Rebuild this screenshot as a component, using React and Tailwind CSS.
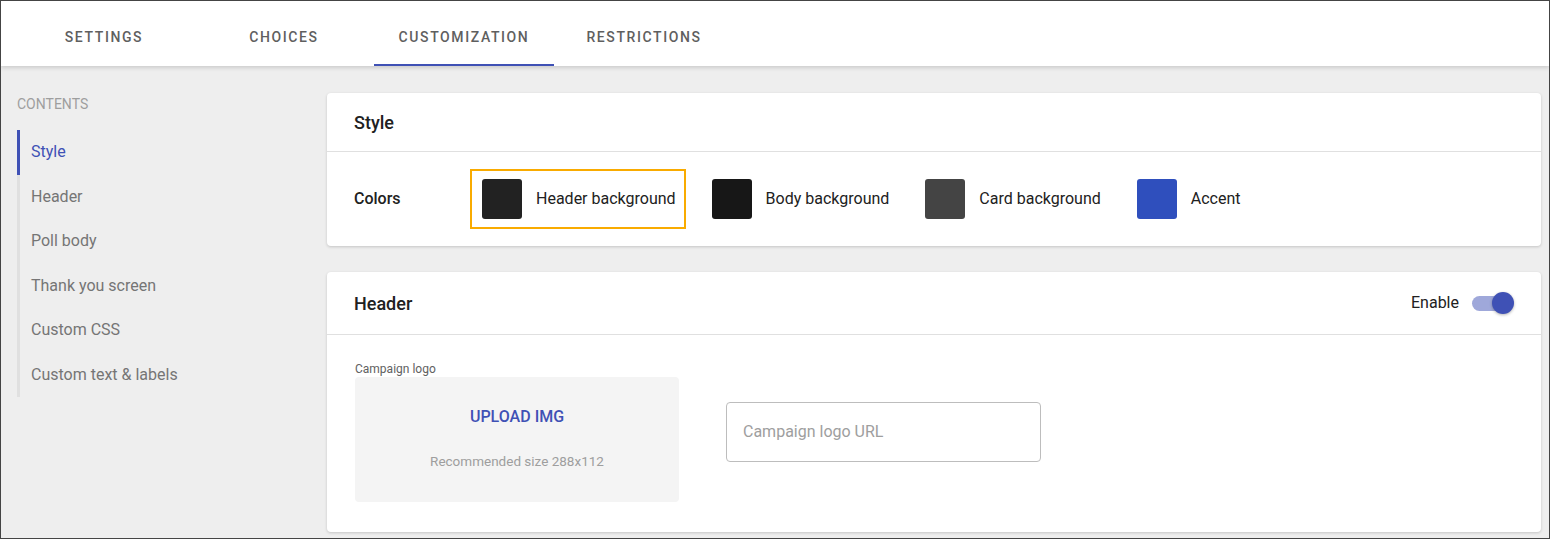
import React from 'react';

const TABS = ['SETTINGS', 'CHOICES', 'CUSTOMIZATION', 'RESTRICTIONS'];

const NAV = ['Style', 'Header', 'Poll body', 'Thank you screen', 'Custom CSS', 'Custom text & labels'];

const COLORS = [
  { label: 'Header background', color: 'bg-[#222222]', selected: true },
  { label: 'Body background', color: 'bg-[#171717]' },
  { label: 'Card background', color: 'bg-[#444444]' },
  { label: 'Accent', color: 'bg-[#2f4fbd]' },
];

const App = () => {
  return (
    <div
      className="w-[1550px] h-[539px] border border-[#444] bg-[#eeeeee] flex flex-col overflow-hidden"
      style={{ fontFamily: 'Roboto, "Liberation Sans", sans-serif' }}
    >
      {/* tabs */}
      <div className="h-[65px] shrink-0 bg-white pl-[13px] flex shadow-[0_2px_4px_rgba(0,0,0,0.14)] relative z-10">
        {TABS.map((t, i) => (
          <div key={t} className="relative w-[180px] h-full flex justify-center pt-[26px]">
            <span className="text-[14px] leading-5 font-medium tracking-[1.6px] text-[#5f5f5f]">{t}</span>
            {i === 2 && <div className="absolute left-0 right-0 bottom-0 h-[2px] bg-[#3f51b5]" />}
          </div>
        ))}
      </div>

      <div className="flex flex-1 min-h-0">
        {/* sidebar */}
        <div className="w-[326px] shrink-0 pl-4 pt-[28px]">
          <div className="text-[14px] leading-5 text-[#9e9e9e] mb-[16px]">CONTENTS</div>
          <div className="flex flex-col">
            {NAV.map((n, i) => (
              <div
                key={n}
                className={
                  'h-[44.5px] flex items-center pl-[11px] border-l-[3px] text-[16px] ' +
                  (i === 0 ? 'border-[#3f51b5] text-[#3f51b5]' : 'border-[#e0e0e0] text-[#757575]')
                }
              >
                {n}
              </div>
            ))}
          </div>
        </div>

        {/* main */}
        <div className="flex-1 pt-[27px] pr-[8px] flex flex-col gap-[26px]">
          <div className="bg-white rounded-[4px] shadow-[0_1px_3px_rgba(0,0,0,0.18)]">
            <div className="h-[59px] px-[27px] flex items-center border-b border-[#e0e0e0]">
              <span className="text-[18px] font-medium text-[#212121]">Style</span>
            </div>
            <div className="h-[94px] px-[27px] flex items-center">
              <span className="w-[116px] text-[16px] font-medium text-[#212121]">Colors</span>
              <div className="flex items-center gap-[14px]">
                {COLORS.map((c) => (
                  <div
                    key={c.label}
                    className={
                      'flex items-center gap-[14px] pl-[10px] pr-[8px] py-[8px] border-2 ' +
                      (c.selected ? 'border-[#f9ab00]' : 'border-transparent')
                    }
                  >
                    <div className={'w-[40px] h-[40px] rounded-[3px] ' + c.color} />
                    <span className="text-[16px] text-[#212121]">{c.label}</span>
                  </div>
                ))}
              </div>
            </div>
          </div>

          <div className="bg-white rounded-[4px] shadow-[0_1px_3px_rgba(0,0,0,0.18)]">
            <div className="h-[63px] px-[27px] flex items-center justify-between border-b border-[#e0e0e0]">
              <span className="text-[18px] font-medium text-[#212121]">Header</span>
              <div className="flex items-center gap-[13px]">
                <span className="text-[16px] text-[#212121]">Enable</span>
                <div className="relative w-[42px] h-[22px]">
                  <div className="absolute left-0 top-[4px] w-[38px] h-[15px] rounded-full bg-[#9fa8da]" />
                  <div className="absolute right-0 top-0 w-[22px] h-[22px] rounded-full bg-[#3f51b5] shadow-[0_1px_3px_rgba(0,0,0,0.3)]" />
                </div>
              </div>
            </div>
            <div className="px-[28px] pt-[26px] pb-[30px] flex items-center gap-[47px]">
              <div className="flex flex-col">
                <span className="text-[12px] leading-4 text-[#616161]">Campaign logo</span>
                <div className="w-[324px] h-[125px] rounded-[4px] bg-[#f4f4f4] flex flex-col items-center pt-[30px]">
                  <span className="text-[16px] leading-5 font-medium text-[#3f51b5]">UPLOAD IMG</span>
                  <span className="mt-[24px] text-[13.5px] leading-5 text-[#9e9e9e]">Recommended size 288x112</span>
                </div>
              </div>
              <div className="w-[315px] h-[60px] border border-[#bdbdbd] rounded-[4px] flex items-center px-4">
                <span className="text-[16px] text-[#9e9e9e]">Campaign logo URL</span>
              </div>
            </div>
          </div>
        </div>
      </div>
    </div>
  );
};

export default App;
